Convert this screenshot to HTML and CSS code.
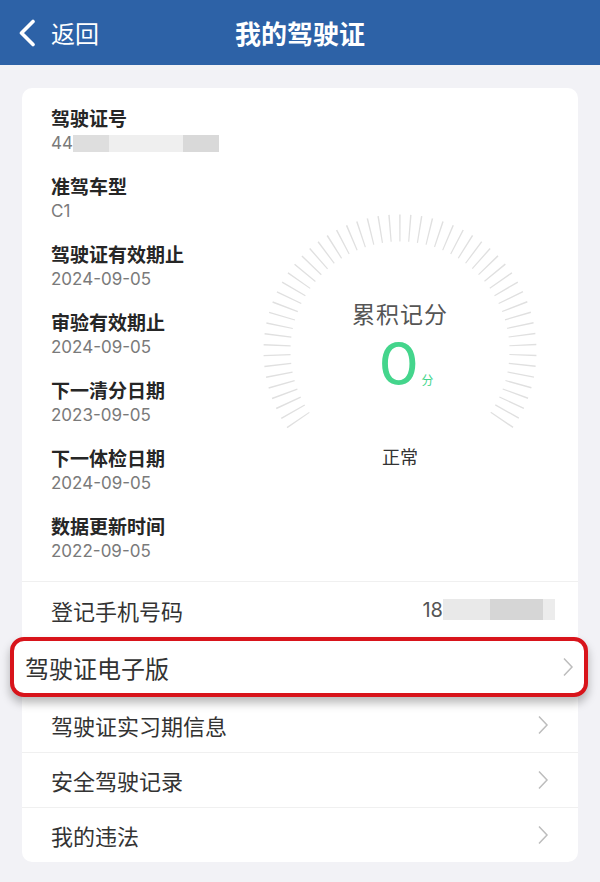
FILE: index.html
```html
<!DOCTYPE html>
<html lang="zh-CN">
<head>
<meta charset="utf-8">
<title>我的驾驶证</title>
<link rel="stylesheet" href="styles.css">
</head>
<body>
<header class="topbar">
  <div class="back">
    <svg class="back-icon" width="18" height="28" viewBox="0 0 18 28"><polyline points="15,2.5 3.5,14 15,25.5" fill="none" stroke="#fff" stroke-width="3.6" stroke-linecap="round" stroke-linejoin="round"/></svg>
    <span class="back-text">返回</span>
  </div>
  <h1 class="title">我的驾驶证</h1>
  <div class="spacer"></div>
</header>
<main class="page">
  <section class="card">
    <div class="info">
      <dl class="fields">
        <div class="field"><dt>驾驶证号</dt><dd>44<span class="mask mask-id"><i class="m1"></i><i class="m2"></i><i class="m3"></i></span></dd></div>
        <div class="field"><dt>准驾车型</dt><dd>C1</dd></div>
        <div class="field"><dt>驾驶证有效期止</dt><dd>2024-09-05</dd></div>
        <div class="field"><dt>审验有效期止</dt><dd>2024-09-05</dd></div>
        <div class="field"><dt>下一清分日期</dt><dd>2023-09-05</dd></div>
        <div class="field"><dt>下一体检日期</dt><dd>2024-09-05</dd></div>
        <div class="field"><dt>数据更新时间</dt><dd>2022-09-05</dd></div>
      </dl>
      <div class="gauge">
        <svg class="gauge-ticks" width="300" height="300" viewBox="0 0 300 300">
          <path d="M48.72 220.75 A123 123 0 1 1 251.28 220.75" pathLength="251" fill="none" stroke="#e0e0e0" stroke-width="27" stroke-dasharray="0.62 4.0096" stroke-dashoffset="-0.15"/>
        </svg>
        <div class="gauge-text">
          <div class="gauge-label">累积记分</div>
          <div class="gauge-score"><span class="num">0</span><span class="unit">分</span></div>
          <div class="gauge-status">正常</div>
        </div>
      </div>
    </div>
    <div class="row row-phone">
      <span class="row-label">登记手机号码</span>
      <span class="phone">18<span class="mask mask-phone"><i class="p1"></i><i class="p2"></i><i class="p3"></i></span></span>
    </div>
    <div class="row row-highlight">
      <span class="row-label">驾驶证电子版</span>
      <svg class="chev" width="12" height="20" viewBox="0 0 12 20"><polyline points="2,1.5 10,10 2,18.5" fill="none" stroke="#bdbdbd" stroke-width="1.5"/></svg>
    </div>
    <div class="row row-plain">
      <span class="row-label">驾驶证实习期信息</span>
      <svg class="chev" width="12" height="20" viewBox="0 0 12 20"><polyline points="2,1.5 10,10 2,18.5" fill="none" stroke="#bdbdbd" stroke-width="1.5"/></svg>
    </div>
    <div class="row">
      <span class="row-label">安全驾驶记录</span>
      <svg class="chev" width="12" height="20" viewBox="0 0 12 20"><polyline points="2,1.5 10,10 2,18.5" fill="none" stroke="#bdbdbd" stroke-width="1.5"/></svg>
    </div>
    <div class="row">
      <span class="row-label">我的违法</span>
      <svg class="chev" width="12" height="20" viewBox="0 0 12 20"><polyline points="2,1.5 10,10 2,18.5" fill="none" stroke="#bdbdbd" stroke-width="1.5"/></svg>
    </div>
  </section>
</main>
</body>
</html>
```
FILE: styles.css
```css
* { box-sizing: border-box; }
html, body { margin: 0; padding: 0; }
body {
  width: 600px;
  height: 882px;
  overflow: hidden;
  background: #f2f2f6;
  font-family: Inter, "Noto Sans CJK SC", sans-serif;
  color: #333;
}
.topbar {
  height: 65px;
  background: #2d62a7;
  display: grid;
  grid-template-columns: 1fr auto 1fr;
  align-items: center;
  color: #fff;
}
.back {
  display: flex;
  align-items: center;
  padding-left: 18px;
}
.back-icon { display: block; }
.back-text {
  margin-left: 15px;
  font-size: 24px;
  line-height: 30px;
  font-family: "Noto Sans CJK SC", sans-serif;
}
.title {
  margin: 0;
  font-size: 26px;
  font-weight: 700;
  line-height: 30px;
  font-family: "Noto Sans CJK SC", sans-serif;
}
.page {
  padding: 23px 22px 19px;
}
.card {
  background: #fff;
  border-radius: 10px;
}
.info {
  display: grid;
  grid-template-columns: 1fr 300px;
  padding: 17px 28px 18px 29px;
}
.fields {
  margin: 0;
  display: flex;
  flex-direction: column;
  gap: 18px;
}
.field dt {
  font-family: "Noto Sans CJK SC", sans-serif;
  font-size: 19px;
  line-height: 26px;
  font-weight: 700;
  color: #262626;
}
.field dd {
  margin: 0;
  font-size: 17px;
  line-height: 24px;
  color: #7a7a7a;
  display: flex;
  align-items: center;
}
.mask { display: inline-flex; height: 17px; }
.mask i { display: block; height: 100%; }
.mask-id .m1 { width: 36px; background: #dedede; }
.mask-id .m2 { width: 74px; background: #efefef; }
.mask-id .m3 { width: 36px; background: #d9d9d9; }
.gauge {
  margin-top: 95px;
  display: grid;
  align-self: start;
}
.gauge-ticks, .gauge-text { grid-area: 1 / 1; }
.gauge-text {
  display: flex;
  flex-direction: column;
  align-items: center;
  padding-top: 99px;
}
.gauge-label {
  font-family: "Noto Sans CJK SC", sans-serif;
  font-size: 23px;
  line-height: 28px;
  color: #555;
  letter-spacing: 1px;
}
.gauge-score {
  margin-top: 8px;
  display: flex;
  align-items: baseline;
  padding-left: 14px;
}
.num {
  font-family: Inter, sans-serif;
  font-size: 59px;
  line-height: 58px;
  font-weight: 400;
  color: #44d58c;
  display: inline-block;
  transform: scaleX(1.1);
}
.unit {
  font-family: "Noto Sans CJK SC", sans-serif;
  font-size: 12px;
  color: #44d58c;
  margin-left: 4px;
}
.gauge-status {
  margin-top: 51px;
  font-family: "Noto Sans CJK SC", sans-serif;
  font-size: 18px;
  line-height: 24px;
  color: #333;
}
.row {
  display: flex;
  align-items: center;
  justify-content: space-between;
  height: 55px;
  border-top: 1px solid #f0f0f0;
  padding: 0 29px;
}
.row-label {
  font-family: "Noto Sans CJK SC", sans-serif;
  font-size: 22px;
  color: #333;
}
.row-phone {
  height: 56px;
  padding-right: 23px;
}
.phone {
  display: flex;
  align-items: center;
  font-size: 20px;
  color: #555;
}
.mask-phone { height: 21px; }
.mask-phone .p1 { width: 47px; background: #e9e9e9; }
.mask-phone .p2 { width: 53px; background: #d6d6d6; }
.mask-phone .p3 { width: 12px; background: #ececec; }
.row-highlight {
  position: relative;
  z-index: 1;
  height: 60px;
  margin: 0 -10px 0 -12px;
  border: 4px solid #d8141b;
  border-radius: 14px;
  background: #fff;
  box-shadow: 0 6px 10px rgba(0, 0, 0, 0.28);
  padding: 0 10px 0 11px;
}
.row-highlight .row-label { font-size: 24px; }
.row-plain { border-top: none; }
.chev { display: block; }
```
